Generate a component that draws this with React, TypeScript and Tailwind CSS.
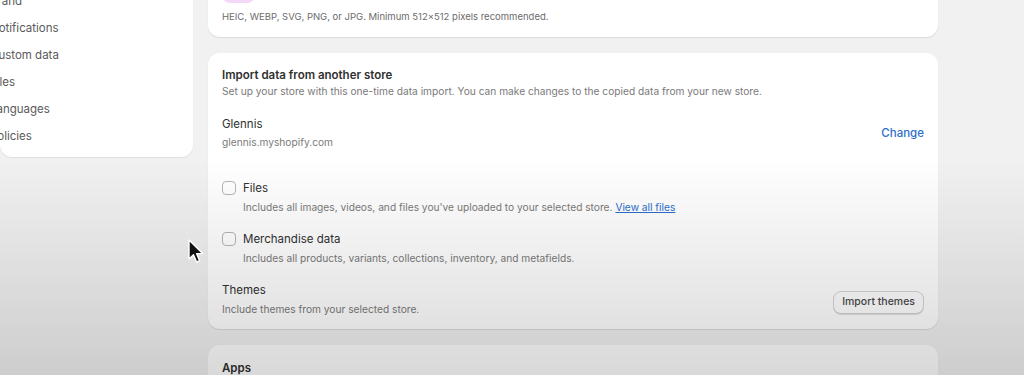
import React from "react"

const navItems = ["Brand", "Notifications", "Custom data", "Files", "Languages", "Policies"]

const Checkbox = () => (
  <span className="mt-[1px] h-[14px] w-[14px] shrink-0 rounded-[4px] border border-[#b5b5b5] bg-white" />
)

const Cursor = () => (
  <svg
    className="pointer-events-none absolute left-[187px] top-[239px]"
    width="18"
    height="26"
    viewBox="0 0 18 26"
  >
    <path
      d="M2 1 L2 20 L6.5 15.8 L9.6 23 L12.6 21.7 L9.6 14.6 L15.6 14.6 Z"
      fill="#111"
      stroke="#fff"
      strokeWidth="1.4"
      strokeLinejoin="round"
    />
  </svg>
)

export default function App() {
  return (
    <div
      className="relative h-[375px] w-[1024px] overflow-hidden bg-[#f1f1f1] text-[11.5px] leading-[16px] text-[#303030]"
      style={{ fontFamily: "Inter, 'Noto Sans', sans-serif" }}
    >
      <div className="flex items-start gap-[15px]">
        <aside className="-mt-[13px] w-[193px] shrink-0 overflow-hidden rounded-b-[12px] bg-white pb-[8px] shadow-[0_1px_1px_rgba(0,0,0,0.08)]">
          {navItems.map((item) => (
            <div key={item} className="-ml-[10px] flex h-[27px] items-center text-[#5a5a5a]">
              {item}
            </div>
          ))}
        </aside>

        <main className="flex w-[730px] flex-col gap-[16px]">
          <section className="-mt-[30px] rounded-b-[12px] bg-white px-[14px] pb-[12px] shadow-[0_1px_1px_rgba(0,0,0,0.1)]">
            <div className="h-[33px] w-[33px] rounded-[8px] bg-[#f5d8f7]" />
            <p className="mt-[6px] text-[9.5px] text-[#6b6b6b]">
              HEIC, WEBP, SVG, PNG, or JPG. Minimum 512×512 pixels recommended.
            </p>
          </section>

          <section className="rounded-[12px] bg-white px-[14px] pb-[12px] pt-[14px] shadow-[0_1px_1px_rgba(0,0,0,0.1)]">
            <h2 className="font-semibold">Import data from another store</h2>
            <p className="text-[10.2px] text-[#7a7a7a]">
              Set up your store with this one-time data import. You can make changes to the copied data from your new store.
            </p>

            <div className="mt-[17px] flex items-center justify-between">
              <div className="flex flex-col gap-[2px]">
                <span>Glennis</span>
                <span className="text-[10.2px] text-[#7a7a7a]">glennis.myshopify.com</span>
              </div>
              <button className="font-medium text-[#2c6ecb]">Change</button>
            </div>

            <div className="mt-[30px] flex gap-[7px]">
              <Checkbox />
              <div className="flex flex-col gap-[3px]">
                <span>Files</span>
                <span className="text-[10.2px] text-[#7a7a7a]">
                  Includes all images, videos, and files you've uploaded to your selected store.{" "}
                  <a className="text-[#2c6ecb] underline">View all files</a>
                </span>
              </div>
            </div>

            <div className="mt-[16px] flex gap-[7px]">
              <Checkbox />
              <div className="flex flex-col gap-[3px]">
                <span>Merchandise data</span>
                <span className="text-[10.2px] text-[#7a7a7a]">
                  Includes all products, variants, collections, inventory, and metafields.
                </span>
              </div>
            </div>

            <div className="mt-[16px] flex items-center justify-between">
              <div className="flex flex-col gap-[3px]">
                <span>Themes</span>
                <span className="text-[10.2px] text-[#7a7a7a]">Include themes from your selected store.</span>
              </div>
              <button className="mt-[5px] h-[23px] rounded-[8px] border border-[#d4d4d4] bg-white px-[8px] text-[10.5px] font-medium text-[#4a4a4a] shadow-[0_1px_0_rgba(0,0,0,0.12)]">
                Import themes
              </button>
            </div>
          </section>

          <section className="h-[80px] rounded-[12px] bg-white px-[14px] pt-[15px] shadow-[0_1px_1px_rgba(0,0,0,0.1)]">
            <h2 className="font-semibold">Apps</h2>
          </section>
        </main>
      </div>

      <div className="pointer-events-none absolute inset-0 bg-[linear-gradient(to_bottom,rgba(0,0,0,0)_42%,rgba(0,0,0,0.15)_100%)]" />
      <Cursor />
    </div>
  )
}
